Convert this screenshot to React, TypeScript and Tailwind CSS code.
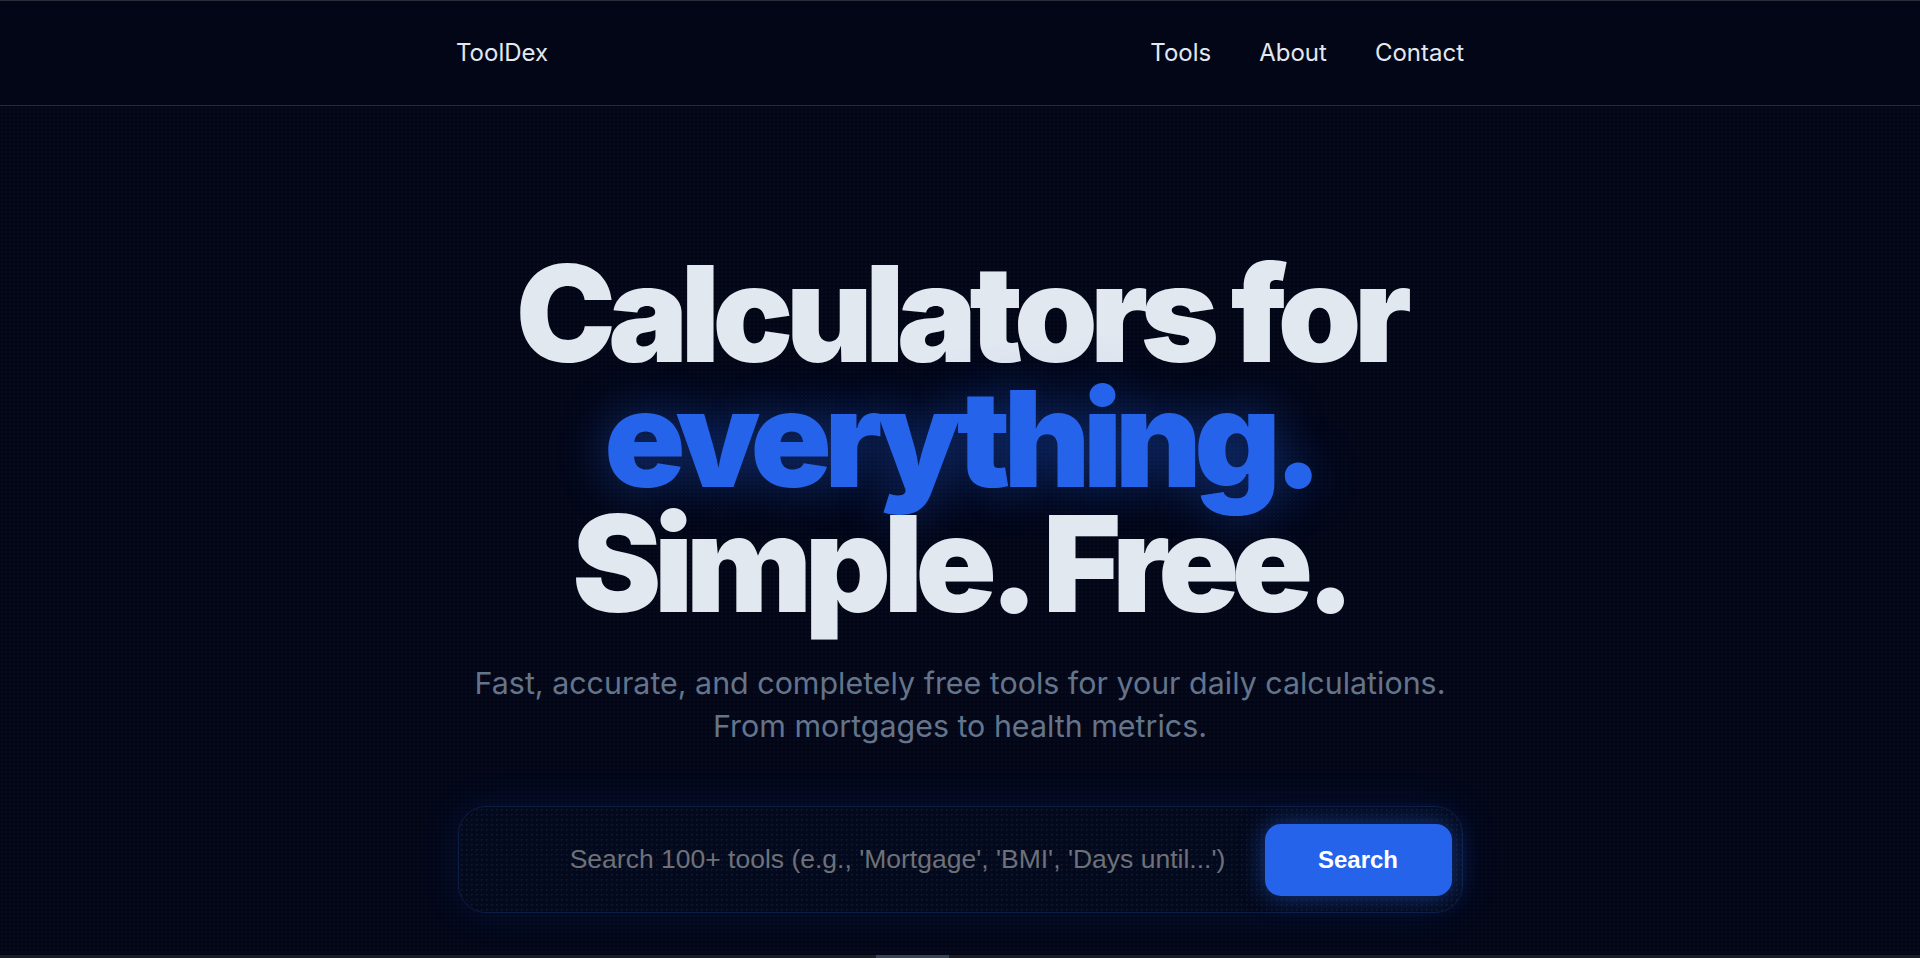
import { useState } from "react";

const navLinks = ["Tools", "About", "Contact"];

export default function App() {
  const [query, setQuery] = useState("");

  return (
    <div className="min-h-screen flex flex-col bg-[#020617] border-t border-[#2b2e38] font-['Inter',sans-serif] text-[#e2e8f0]">
      <header className="border-b border-[#252a38]">
        <nav className="max-w-[1008px] mx-auto h-[104px] flex items-center justify-between">
          <a href="#" className="text-[24px] leading-none">ToolDex</a>
          <ul className="flex items-center gap-[48px] text-[24px] leading-none">
            {navLinks.map((l) => (
              <li key={l}>
                <a href="#">{l}</a>
              </li>
            ))}
          </ul>
        </nav>
      </header>

      <main className="flex-1 flex flex-col items-center pt-[145px] bg-[radial-gradient(rgba(148,163,184,0.035)_1px,transparent_1px)] bg-[size:4px_4px]">
        <h1 className="text-center font-black text-[134px] leading-[125px] tracking-[-0.057em]">
          Calculators for
          <br />
          <span className="text-[#2563eb] [text-shadow:0_0_50px_rgba(37,99,235,0.45)]">everything.</span>
          <br />
          Simple. Free.
        </h1>

        <p className="mt-[36px] text-center text-[30.4px] leading-[43px] text-[#64748b]">
          Fast, accurate, and completely free tools for your daily calculations.
          <br />
          From mortgages to health metrics.
        </p>

        <form
          onSubmit={(e) => e.preventDefault()}
          className="mt-[58px] w-[1005px] h-[107px] flex items-center pl-[10px] pr-[10px] rounded-[28px] border border-[#0e1d44] bg-[#040a1d] bg-[radial-gradient(rgba(100,116,139,0.12)_1px,transparent_1px)] bg-[size:5px_5px] shadow-[0_0_40px_rgba(37,99,235,0.12)]"
        >
          <input
            value={query}
            onChange={(e) => setQuery(e.target.value)}
            placeholder="Search 100+ tools (e.g., 'Mortgage', 'BMI', 'Days until...')"
            className="flex-1 min-w-0 h-full bg-transparent outline-none text-center pl-[78px] mr-[16px] font-['Liberation_Sans',Arial,sans-serif] text-[26.5px] text-[#e2e8f0] placeholder:text-[#6e717a]"
          />
          <button
            type="submit"
            className="w-[187px] h-[72px] rounded-[16px] bg-[#2563eb] text-white font-bold font-['Liberation_Sans',Arial,sans-serif] text-[24px] shadow-[0_0_24px_rgba(37,99,235,0.5)]"
          >
            Search
          </button>
        </form>
      </main>

      <div className="h-[3px] bg-[#1b1e25] flex">
        <div className="ml-[876px] w-[73px] h-full bg-[#3b4452]" />
      </div>
    </div>
  );
}
